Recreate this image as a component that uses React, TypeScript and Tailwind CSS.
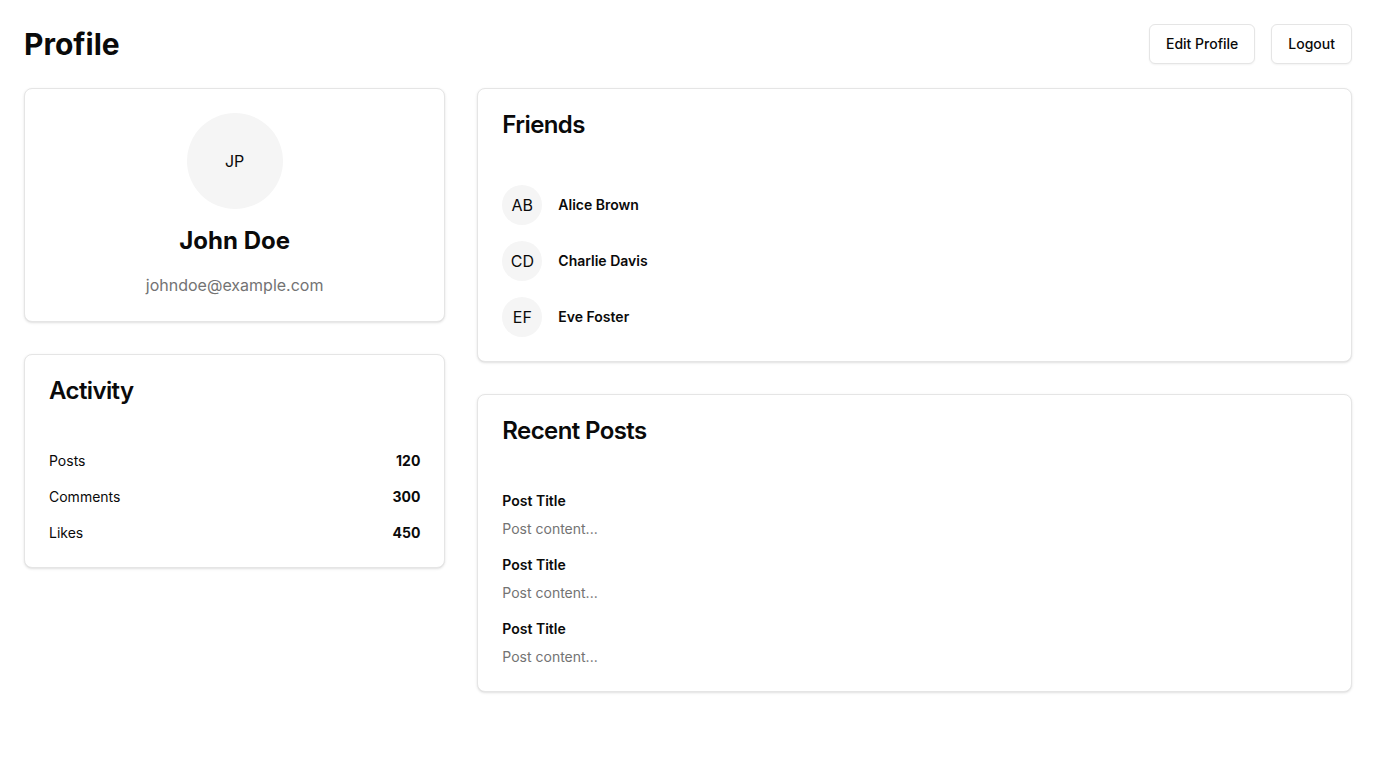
const friends = [
  { initials: "AB", name: "Alice Brown" },
  { initials: "CD", name: "Charlie Davis" },
  { initials: "EF", name: "Eve Foster" },
];

const activity = [
  { label: "Posts", value: 120 },
  { label: "Comments", value: 300 },
  { label: "Likes", value: 450 },
];

const posts = [
  { title: "Post Title", content: "Post content..." },
  { title: "Post Title", content: "Post content..." },
  { title: "Post Title", content: "Post content..." },
];

const Card = ({ children }: { children: React.ReactNode }) => (
  <div className="rounded-lg border border-neutral-200 bg-white shadow-sm">
    {children}
  </div>
);

const CardTitle = ({ children }: { children: React.ReactNode }) => (
  <div className="p-6">
    <h2 className="text-2xl leading-none font-semibold tracking-tight">
      {children}
    </h2>
  </div>
);

const App = () => {
  return (
    <div className="min-h-screen bg-white p-6 text-[#0a0a0a] font-['Inter',sans-serif]">
      {/* HEADER */}
      <div className="mb-6 flex items-center justify-between">
        <h1 className="text-3xl font-bold">Profile</h1>
        <div className="flex gap-4">
          <button className="h-10 rounded-md border border-neutral-200 bg-white px-4 text-sm font-medium shadow-xs">
            Edit Profile
          </button>
          <button className="h-10 rounded-md border border-neutral-200 bg-white px-4 text-sm font-medium shadow-xs">
            Logout
          </button>
        </div>
      </div>

      <div className="grid grid-cols-3 items-start gap-8">
        {/* LEFT COLUMN */}
        <div className="flex flex-col gap-8">
          <Card>
            <div className="flex flex-col items-center gap-4 p-6">
              <div className="flex h-24 w-24 items-center justify-center rounded-full bg-neutral-100 text-base">
                JP
              </div>
              <h2 className="text-2xl font-bold">John Doe</h2>
              <p className="text-base text-neutral-500">johndoe@example.com</p>
            </div>
          </Card>

          <Card>
            <CardTitle>Activity</CardTitle>
            <div className="flex flex-col gap-4 p-6">
              {activity.map((a) => (
                <div
                  key={a.label}
                  className="flex items-center justify-between text-sm"
                >
                  <span>{a.label}</span>
                  <span className="font-bold">{a.value}</span>
                </div>
              ))}
            </div>
          </Card>
        </div>

        {/* RIGHT COLUMN */}
        <div className="col-span-2 flex flex-col gap-8">
          <Card>
            <CardTitle>Friends</CardTitle>
            <div className="flex flex-col gap-4 p-6">
              {friends.map((f) => (
                <div key={f.name} className="flex items-center gap-4">
                  <div className="flex h-10 w-10 items-center justify-center rounded-full bg-neutral-100 text-base">
                    {f.initials}
                  </div>
                  <span className="text-sm font-semibold">{f.name}</span>
                </div>
              ))}
            </div>
          </Card>

          <Card>
            <CardTitle>Recent Posts</CardTitle>
            <div className="flex flex-col gap-4 p-6">
              {posts.map((p, i) => (
                <div key={i} className="flex flex-col gap-2">
                  <h3 className="text-sm font-semibold">{p.title}</h3>
                  <p className="text-sm text-neutral-500">{p.content}</p>
                </div>
              ))}
            </div>
          </Card>
        </div>
      </div>
    </div>
  );
};

export default App;
